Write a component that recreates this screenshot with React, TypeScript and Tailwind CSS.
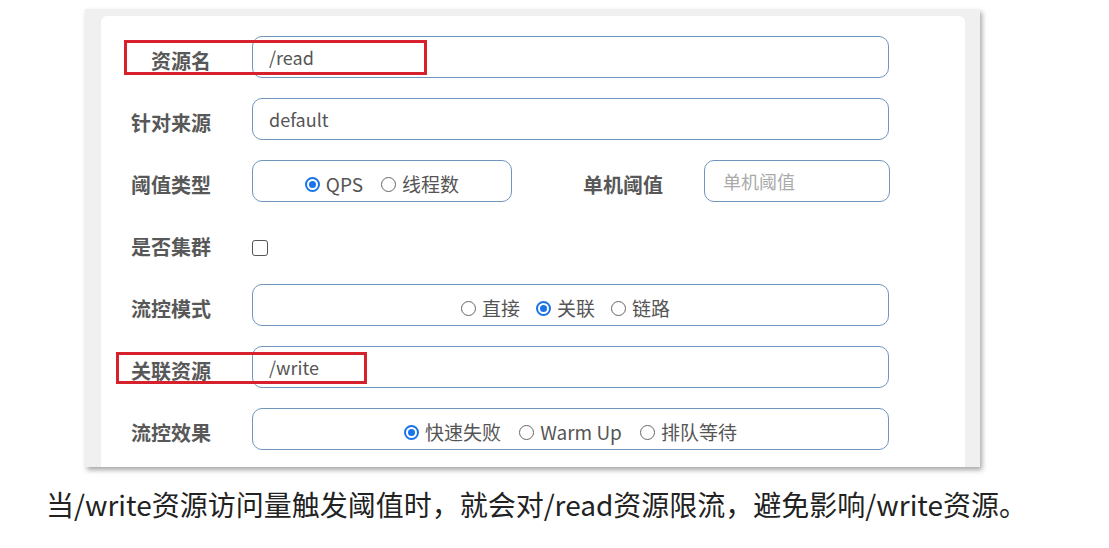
import React from "react";

const CJK = "font-['Noto_Sans_CJK_SC',sans-serif]";

function Radio({ checked, label }: { checked?: boolean; label: string }) {
  return (
    <span className="flex items-center gap-[6px]">
      {checked ? (
        <span className="w-[15px] h-[15px] rounded-full border-2 border-[#1a73e8] flex items-center justify-center">
          <span className="w-[7px] h-[7px] rounded-full bg-[#1a73e8]" />
        </span>
      ) : (
        <span className="w-[15px] h-[15px] rounded-full border border-[#666]" />
      )}
      <span>{label}</span>
    </span>
  );
}

function Label({ children, w = "w-[110px]" }: { children: React.ReactNode; w?: string }) {
  return (
    <div className={`${w} shrink-0 text-right text-[20px] font-bold text-[#585858] pt-2 leading-none`}>
      {children}
    </div>
  );
}

const box =
  "h-[42px] rounded-[10px] border border-[#7096be] bg-white flex items-center text-[18px] text-[#555]";

const radios = "pt-[6px] text-[19px]";

export default function App() {
  return (
    <div className={`relative w-[1109px] h-[548px] bg-white overflow-hidden ${CJK}`}>
      {/* screenshot frame */}
      <div className="ml-[85px] mt-[9px] w-[895px] h-[458px] bg-[#f0f0f0] pl-[16px] pr-[15px] pt-[7px] shadow-[2px_3px_5px_rgba(0,0,0,0.35)]">
        <div className="h-full bg-white rounded-t-[6px] pt-[20px] flex flex-col gap-[20px]">
          <div className="flex items-center gap-[41px]">
            <Label>资源名</Label>
            <div className={`${box} w-[637px] pl-4`}>/read</div>
          </div>
          <div className="flex items-center gap-[41px]">
            <Label>针对来源</Label>
            <div className={`${box} w-[637px] pl-4`}>default</div>
          </div>
          <div className="flex items-center gap-[41px]">
            <Label>阈值类型</Label>
            <div className={`${box} ${radios} w-[260px] justify-center gap-[18px]`}>
              <Radio checked label="QPS" />
              <Radio label="线程数" />
            </div>
            <Label>单机阈值</Label>
            <div className={`${box} w-[186px] pl-[18px] text-[#aaa]`}>单机阈值</div>
          </div>
          <div className="flex items-center gap-[41px] h-[42px]">
            <Label>是否集群</Label>
            <span className="mt-[10px] w-[16px] h-[16px] rounded-[3px] border-[1.5px] border-[#555]" />
          </div>
          <div className="flex items-center gap-[41px]">
            <Label>流控模式</Label>
            <div className={`${box} ${radios} w-[637px] justify-center gap-[16px] pr-[10px]`}>
              <Radio label="直接" />
              <Radio checked label="关联" />
              <Radio label="链路" />
            </div>
          </div>
          <div className="flex items-center gap-[41px]">
            <Label>关联资源</Label>
            <div className={`${box} w-[637px] pl-4`}>/write</div>
          </div>
          <div className="flex items-center gap-[41px]">
            <Label>流控效果</Label>
            <div className={`${box} ${radios} w-[637px] justify-center gap-[18px]`}>
              <Radio checked label="快速失败" />
              <Radio label="Warm Up" />
              <Radio label="排队等待" />
            </div>
          </div>
        </div>
      </div>

      {/* red annotation boxes */}
      <div className="absolute left-[124px] top-[40px] w-[303px] h-[35px] border-[3px] border-[#d6202c]" />
      <div className="absolute left-[116px] top-[352px] w-[251px] h-[32px] border-[3px] border-[#d6202c]" />

      <p className="mt-[23px] ml-[46px] text-[28px] leading-none text-[#222]">
        当/write资源访问量触发阈值时，就会对/read资源限流，避免影响/write资源。
      </p>
    </div>
  );
}
